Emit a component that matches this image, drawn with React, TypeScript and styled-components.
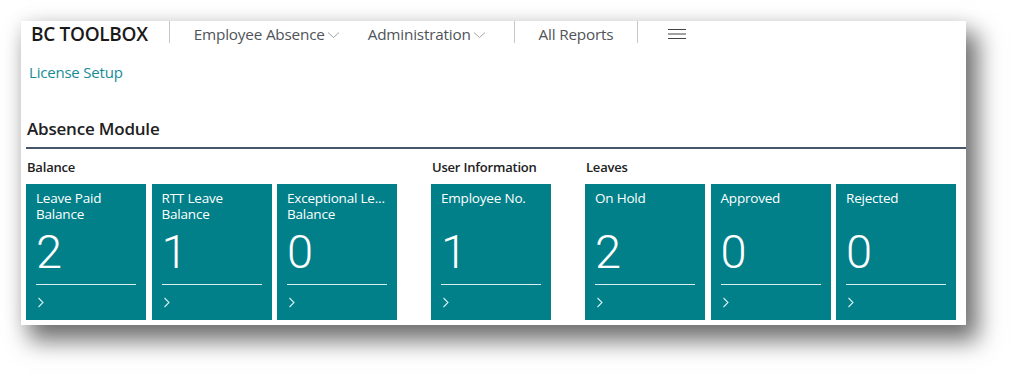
import { styled, createGlobalStyle } from "styled-components";

const GlobalStyle = createGlobalStyle`
  body {
    margin: 0;
    background: #ffffff;
    font-family: "Open Sans", "Noto Sans", sans-serif;
  }
`;

const tileGroups = [
  {
    label: "Balance",
    tiles: [
      { title: "Leave Paid Balance", value: 2 },
      { title: "RTT Leave Balance", value: 1 },
      { title: "Exceptional Le... Balance", value: 0 },
    ],
  },
  {
    label: "User Information",
    tiles: [{ title: "Employee No.", value: 1 }],
  },
  {
    label: "Leaves",
    tiles: [
      { title: "On Hold", value: 2 },
      { title: "Approved", value: 0 },
      { title: "Rejected", value: 0 },
    ],
  },
];

const Chevron = () => (
  <svg width="13" height="8" viewBox="0 0 13 8" fill="none">
    <path d="M1 1.5l5.5 5 5.5-5" stroke="#9a9a9a" strokeWidth="0.9" />
  </svg>
);

const Hamburger = () => (
  <svg width="18" height="12" viewBox="0 0 18 12" fill="none">
    <path d="M0 1.5h18M0 6h18M0 10.5h18" stroke="#444" strokeWidth="1.2" />
  </svg>
);

const Arrow = () => (
  <svg width="8" height="11" viewBox="0 0 8 11" fill="none">
    <path d="M1.5 1l4.5 4.5-4.5 4.5" stroke="#d6eef0" strokeWidth="1.1" />
  </svg>
);

const App = () => {
  return (
    <Page>
      <GlobalStyle />
      <Card>
        <NavBar>
          <Brand>BC TOOLBOX</Brand>
          <Divider />
          <NavItem $menu>
            Employee Absence
            <Chevron />
          </NavItem>
          <NavItem $menu $tight>
            Administration
            <Chevron />
          </NavItem>
          <Divider />
          <NavItem>All Reports</NavItem>
          <Divider />
          <MenuButton>
            <Hamburger />
          </MenuButton>
        </NavBar>
        <ActionRow>
          <ActionLink>License Setup</ActionLink>
        </ActionRow>
        <SectionTitle>Absence Module</SectionTitle>
        <Groups>
          {tileGroups.map((group) => (
            <Group key={group.label}>
              <GroupLabel>{group.label}</GroupLabel>
              <TileRow>
                {group.tiles.map((tile) => (
                  <Tile key={tile.title}>
                    <TileTitle>{tile.title}</TileTitle>
                    <TileValue>{tile.value}</TileValue>
                    <TileFooter>
                      <Arrow />
                    </TileFooter>
                  </Tile>
                ))}
              </TileRow>
            </Group>
          ))}
        </Groups>
      </Card>
    </Page>
  );
};

export default App;

const Page = styled.div`
  padding: 21px 0 0 21px;
  height: 380px;
  box-sizing: border-box;
`;

const Card = styled.div`
  width: 945px;
  height: 304px;
  box-sizing: border-box;
  background: #fff;
  padding: 0 0 0 5px;
  box-shadow: 10px 14px 22px 2px rgba(0, 0, 0, 0.55),
    0 0 18px rgba(0, 0, 0, 0.08);
`;

const NavBar = styled.div`
  display: flex;
  align-items: center;
  height: 25px;
  padding-left: 5px;
`;

const Brand = styled.div`
  font-size: 19px;
  font-weight: 600;
  color: #1a1a1a;
  letter-spacing: -0.3px;
  padding-right: 21px;
`;

const Divider = styled.div`
  width: 1px;
  height: 22px;
  background: #c4c6c8;
  align-self: flex-start;
`;

const NavItem = styled.div<{ $menu?: boolean; $tight?: boolean }>`
  display: flex;
  align-items: center;
  gap: 2px;
  font-size: 15.3px;
  color: #505358;
  letter-spacing: -0.2px;
  padding: 0 ${(p) => (p.$menu ? 28 : 24)}px 0 ${(p) => (p.$tight ? 0 : 24)}px;

  svg {
    margin-top: 2px;
  }
`;

const MenuButton = styled.div`
  display: flex;
  align-items: center;
  padding-left: 30px;
`;

const ActionRow = styled.div`
  height: 52px;
  display: flex;
  align-items: center;
  padding-left: 3px;
`;

const ActionLink = styled.span`
  font-size: 15px;
  color: #168c97;
  letter-spacing: -0.2px;
`;

const SectionTitle = styled.div`
  height: 51px;
  padding: 0 0 7px 1px;
  display: flex;
  align-items: flex-end;
  font-size: 17px;
  font-weight: 600;
  color: #212121;
  letter-spacing: -0.2px;
  border-bottom: 2px solid #45556a;
  box-sizing: border-box;
`;

const Groups = styled.div`
  display: flex;
  gap: 34px;
`;

const Group = styled.div`
  display: flex;
  flex-direction: column;
`;

const GroupLabel = styled.div`
  height: 35px;
  display: flex;
  align-items: center;
  padding: 1px 0 0 1px;
  box-sizing: border-box;
  font-size: 13px;
  font-weight: 600;
  color: #212121;
  letter-spacing: -0.2px;
`;

const TileRow = styled.div`
  display: flex;
  gap: 5.5px;
`;

const Tile = styled.div`
  width: 120px;
  height: 136px;
  box-sizing: border-box;
  background: #01808a;
  padding: 6px 10px 0 10px;
  display: flex;
  flex-direction: column;
  color: #fff;
`;

const TileTitle = styled.div`
  font-size: 13.5px;
  line-height: 16px;
  height: 32px;
  letter-spacing: -0.2px;
`;

const TileValue = styled.div`
  font-family: Roboto, "Open Sans", sans-serif;
  font-size: 47px;
  font-weight: 300;
  line-height: 47px;
  height: 63px;
  padding-top: 5.5px;
  border-bottom: 1px solid #d9eef0;
  box-sizing: border-box;
`;

const TileFooter = styled.div`
  display: flex;
  align-items: center;
  height: 35px;
  padding-left: 1px;
`;
